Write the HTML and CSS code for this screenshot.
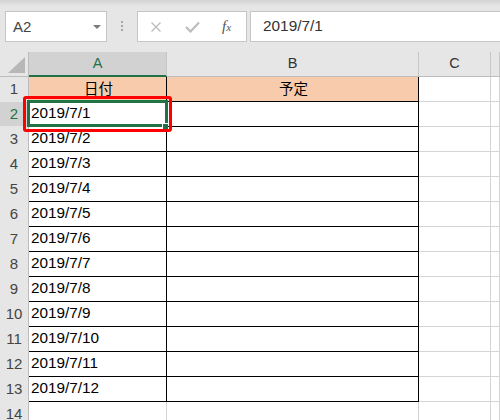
FILE: index.html
```html
<!DOCTYPE html>
<html lang="ja">
<head>
  <meta charset="UTF-8" />
  <title>Sheet</title>
  <link rel="stylesheet" href="styles.css">
</head>
<body>
  <!-- name box / formula bar -->
  <div class="toolbar">
    <div class="namebox">
      <span>A2</span>
      <span class="arrow"></span>
    </div>
    <div class="grip"><i></i><i></i><i></i></div>
    <div class="fnbox">
      <svg class="ico-x" width="12" height="10" viewBox="0 0 12 10">
        <path d="M1.5 0.5 L10.5 9.5 M10.5 0.5 L1.5 9.5" stroke="#bdbdbd" stroke-width="1.4" fill="none" />
      </svg>
      <svg class="ico-ok" width="15" height="12" viewBox="0 0 15 12">
        <path d="M1 6 L5.5 10.5 L14 1.5" stroke="#bdbdbd" stroke-width="2.2" fill="none" />
      </svg>
      <span class="fx"><i>f</i><small>x</small></span>
    </div>
    <div class="formula">2019/7/1</div>
  </div>

  <!-- sheet -->
  <div class="sheet">
    <div class="cell corner"><span class="tri"></span></div>
    <div class="cell ch on">A</div>
    <div class="cell ch">B</div>
    <div class="cell ch">C</div>
    <div class="cell ch"></div>

    <div class="cell rh">1</div>
    <div class="cell t head jp">日付</div>
    <div class="cell t head jp">予定</div>
    <div class="cell"></div>
    <div class="cell"></div>

    <div class="cell rh on">2</div>
    <div class="cell t sel-cell">2019/7/1
      <span class="sel"></span>
      <span class="handle"></span>
      <span class="mark"></span>
    </div>
    <div class="cell t"></div>
    <div class="cell"></div>
    <div class="cell"></div>

    <div class="cell rh">3</div>
    <div class="cell t">2019/7/2</div>
    <div class="cell t"></div>
    <div class="cell"></div>
    <div class="cell"></div>

    <div class="cell rh">4</div>
    <div class="cell t">2019/7/3</div>
    <div class="cell t"></div>
    <div class="cell"></div>
    <div class="cell"></div>

    <div class="cell rh">5</div>
    <div class="cell t">2019/7/4</div>
    <div class="cell t"></div>
    <div class="cell"></div>
    <div class="cell"></div>

    <div class="cell rh">6</div>
    <div class="cell t">2019/7/5</div>
    <div class="cell t"></div>
    <div class="cell"></div>
    <div class="cell"></div>

    <div class="cell rh">7</div>
    <div class="cell t">2019/7/6</div>
    <div class="cell t"></div>
    <div class="cell"></div>
    <div class="cell"></div>

    <div class="cell rh">8</div>
    <div class="cell t">2019/7/7</div>
    <div class="cell t"></div>
    <div class="cell"></div>
    <div class="cell"></div>

    <div class="cell rh">9</div>
    <div class="cell t">2019/7/8</div>
    <div class="cell t"></div>
    <div class="cell"></div>
    <div class="cell"></div>

    <div class="cell rh">10</div>
    <div class="cell t">2019/7/9</div>
    <div class="cell t"></div>
    <div class="cell"></div>
    <div class="cell"></div>

    <div class="cell rh">11</div>
    <div class="cell t">2019/7/10</div>
    <div class="cell t"></div>
    <div class="cell"></div>
    <div class="cell"></div>

    <div class="cell rh">12</div>
    <div class="cell t">2019/7/11</div>
    <div class="cell t"></div>
    <div class="cell"></div>
    <div class="cell"></div>

    <div class="cell rh">13</div>
    <div class="cell t">2019/7/12</div>
    <div class="cell t"></div>
    <div class="cell"></div>
    <div class="cell"></div>

    <div class="cell rh">14</div>
    <div class="cell"></div>
    <div class="cell"></div>
    <div class="cell"></div>
    <div class="cell"></div>
  </div>
</body>
</html>
```

FILE: styles.css
```css
body {
  margin: 0;
  width: 500px;
  height: 420px;
  overflow: hidden;
  background: #fff;
  font-family: "Liberation Sans", "Noto Sans CJK JP", sans-serif;
  color: #000;
}

/* top bar */
.toolbar {
  display: flex;
  align-items: flex-start;
  height: 52px;
  box-sizing: border-box;
  padding: 11px 0 0 5px;
  background: linear-gradient(#d3d3d3 0, #e6e6e6 6px);
  overflow: hidden;
}

.namebox {
  display: flex;
  align-items: center;
  justify-content: space-between;
  flex: none;
  width: 102px;
  height: 31px;
  box-sizing: border-box;
  padding: 0 5px 0 7px;
  background: #fff;
  border: 1px solid #c6c6c6;
  font-size: 15px;
  color: #444;
}

.arrow {
  width: 0;
  height: 0;
  border-left: 4px solid transparent;
  border-right: 4px solid transparent;
  border-top: 4px solid #7a7a7a;
  margin-top: 1px;
}

.grip {
  display: flex;
  flex-direction: column;
  gap: 2px;
  flex: none;
  width: 3px;
  margin: 10px 13px 0 14px;
}

.grip i {
  display: block;
  width: 2px;
  height: 2px;
  background: #a6a6a6;
}

.fnbox {
  display: flex;
  align-items: center;
  flex: none;
  width: 110px;
  height: 31px;
  box-sizing: border-box;
  background: #fff;
  border: 1px solid #c6c6c6;
}

.ico-x {
  margin-left: 12px;
}

.ico-ok {
  margin-left: 23px;
}

.fx {
  margin-left: 22px;
  font-family: "Liberation Serif", serif;
  font-size: 15px;
  color: #555;
}

.fx small {
  font-size: 11px;
  font-style: italic;
}

.formula {
  flex: none;
  width: 260px;
  height: 31px;
  box-sizing: border-box;
  margin-left: 3px;
  padding-left: 12px;
  background: #fff;
  border: 1px solid #c6c6c6;
  font-size: 15.4px;
  line-height: 28px;
  color: #333;
}

/* grid */
.sheet {
  display: grid;
  grid-template-columns: 29px 138px 252px 72px 1fr;
  grid-auto-rows: 25px;
}

.cell {
  box-sizing: border-box;
  border-right: 1px solid #d4d4d4;
  border-bottom: 1px solid #d4d4d4;
  padding-left: 2px;
  font-size: 15.3px;
  line-height: 21px;
  white-space: nowrap;
}

.corner {
  display: flex;
  justify-content: flex-end;
  align-items: flex-end;
  padding: 0 3px 3px 0;
  background: #e6e6e6;
  border-right-color: #bcbcbc;
  border-bottom-color: #bcbcbc;
}

.tri {
  width: 0;
  height: 0;
  border-left: 17px solid transparent;
  border-bottom: 16px solid #b7b7b7;
}

.ch {
  padding: 0;
  background: #e6e6e6;
  border-right-color: #c6c6c6;
  border-bottom-color: #bcbcbc;
  text-align: center;
  font-size: 14.5px;
  line-height: 23px;
  color: #333;
}

.ch.on {
  background: #d2d2d2;
  color: #217346;
  border-bottom: 2px solid #217346;
}

.rh {
  padding: 0;
  background: #e6e6e6;
  border-right-color: #bcbcbc;
  border-bottom-color: #e6e6e6;
  text-align: center;
  font-size: 15px;
  line-height: 23px;
  color: #444;
}

.rh.on {
  background: #d2d2d2;
  color: #217346;
}

.t {
  border-right-color: #000;
  border-bottom-color: #000;
}

.head {
  background: #f8cbad;
  text-align: center;
}

.jp {
  font-family: "Noto Sans CJK JP", sans-serif;
  font-size: 14.5px;
}

/* active cell and the red annotation */
.sel-cell {
  position: relative;
}

.sel {
  position: absolute;
  left: -2px;
  top: -2px;
  width: 141px;
  height: 27px;
  box-sizing: border-box;
  border: 3px solid #217346;
}

.handle {
  position: absolute;
  left: 133px;
  top: 21px;
  width: 6px;
  height: 6px;
  box-sizing: border-box;
  background: #217346;
  border-left: 1px solid #fff;
  border-top: 1px solid #fff;
}

.mark {
  position: absolute;
  left: -6px;
  top: -6px;
  width: 149px;
  height: 36px;
  box-sizing: border-box;
  border: 3px solid #f00;
  border-radius: 3px;
}
```
